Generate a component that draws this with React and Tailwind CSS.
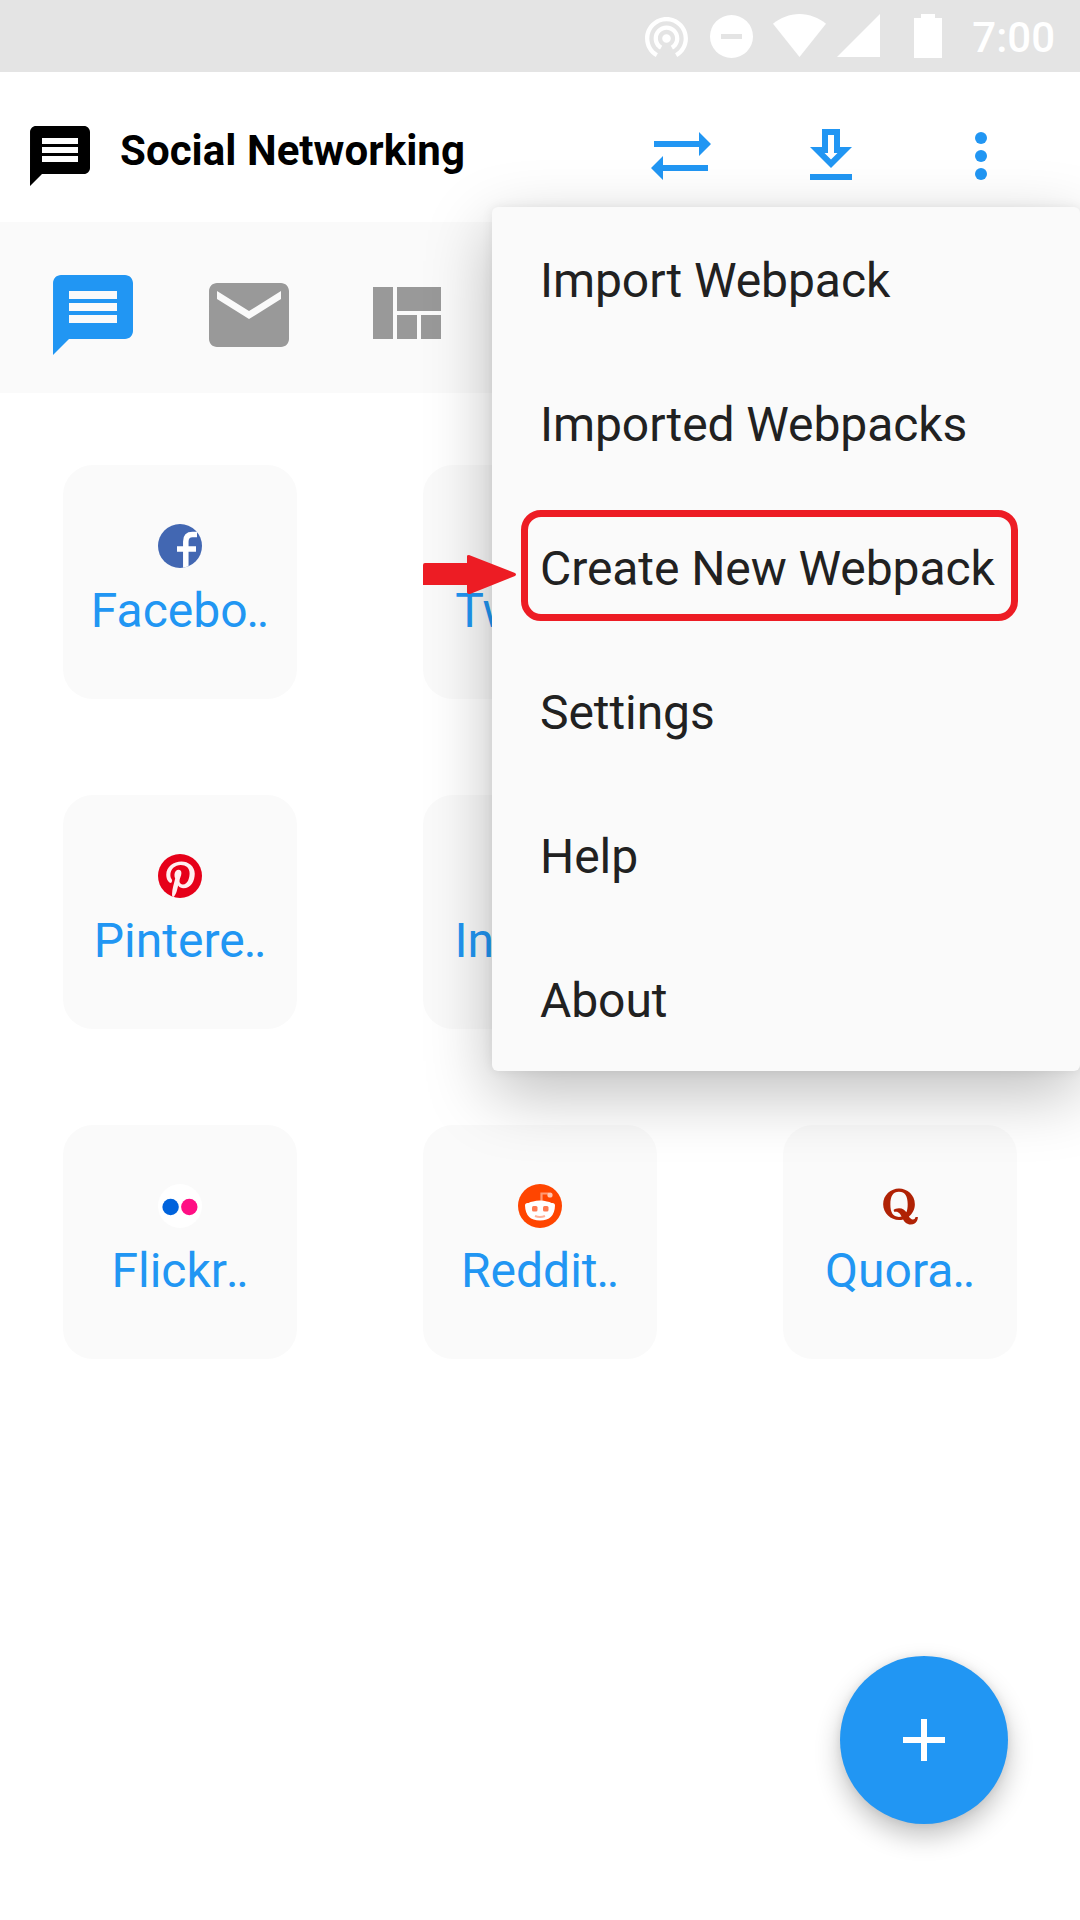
import React from "react";
import { FaQuora, FaPinterestP } from "react-icons/fa";

const MESSAGE =
  "M20 2H4c-1.1 0-1.99.9-1.99 2L2 22l4-4h14c1.1 0 2-.9 2-2V4c0-1.1-.9-2-2-2zm-2 12H6v-2h12v2zm0-3H6V9h12v2zm0-3H6V6h12v2z";
const MAIL =
  "M20 4H4c-1.1 0-1.99.9-1.99 2L2 18c0 1.1.9 2 2 2h16c1.1 0 2-.9 2-2V6c0-1.1-.9-2-2-2zm0 4l-8 5-8-5V6l8 5 8-5v2z";
const QUILT =
  "M10 18h5v-6h-5v6zm-6 0h5V5H4v13zm12 0h5v-6h-5v6zM10 5v6h11V5H10z";
const TETHERING =
  "M12 11c-1.1 0-2 .9-2 2s.9 2 2 2 2-.9 2-2-.9-2-2-2zm6 2c0-3.31-2.69-6-6-6s-6 2.69-6 6c0 2.22 1.21 4.15 3 5.19l1-1.74c-1.19-.7-2-1.97-2-3.45 0-2.21 1.79-4 4-4s4 1.79 4 4c0 1.48-.81 2.75-2 3.45l1 1.74c1.79-1.04 3-2.97 3-5.19zM12 3C6.48 3 2 7.48 2 13c0 3.7 2.01 6.92 4.99 8.65l1-1.73C5.61 18.53 4 15.96 4 13c0-4.42 3.58-8 8-8s8 3.58 8 8c0 2.96-1.61 5.53-4 6.92l1 1.73c2.99-1.73 5-4.95 5-8.65 0-5.52-4.48-10-10-10z";

function Icon({ d, className }) {
  return (
    <svg viewBox="0 0 24 24" fill="currentColor" className={className}>
      <path d={d} />
    </svg>
  );
}

function StatusBar() {
  return (
    <div className="flex h-[72px] items-start justify-end bg-[#e4e4e4] pr-[24px] text-white">
      <svg viewBox="2 3 20 18.65" fill="currentColor" className="mt-[17px] h-[40px] w-[43px]">
        <path d={TETHERING} />
      </svg>
      <svg viewBox="0 0 43 43" className="mt-[15px] ml-[22px] size-[43px]">
        <path fillRule="evenodd" fill="currentColor" d="M21.5 0a21.5 21.5 0 1 0 0 43a21.5 21.5 0 1 0 0-43zM11 19h21v5H11z" />
      </svg>
      <svg viewBox="0 0 53 43" className="mt-[14px] ml-[20px] h-[43px] w-[53px]">
        <path fill="currentColor" d="M0 9.700C7.500 3.800 16.500 0 26.500 0S45.500 3.800 53 9.700L26.500 43z" />
      </svg>
      <svg viewBox="0 0 43 43" className="mt-[14px] ml-[11px] size-[43px]">
        <path fill="currentColor" d="M43 0V43H0z" />
      </svg>
      <svg viewBox="0 0 28 44" className="mt-[14px] ml-[34px] h-[44px] w-[28px]">
        <path fill="currentColor" d="M7 0h14v4h7v40H0V4h7z" />
      </svg>
      <span className="mt-[13px] ml-[30px] w-[84px] pr-px text-right text-[42px] leading-[50px] font-medium whitespace-nowrap">7:00</span>
    </div>
  );
}

function Header() {
  return (
    <div className="flex h-[150px] items-start bg-white pl-[24px]">
      <Icon d={MESSAGE} className="mt-[48px] size-[72px] text-black" />
      <h1 className="mt-[54px] ml-[24px] w-[522px] text-[42px] leading-[50px] font-bold tracking-[0.05px] whitespace-nowrap text-black">
        Social Networking
      </h1>
      <div className="mt-[48px] flex text-[#2196f3]">
        <svg viewBox="0 0 72 72" fill="currentColor" className="ml-[3px] size-[72px]">
          <path d="M9 21h45v-9l12 12l-12 12v-9H9zM63 45H18v-9L6 48l12 12v-9h45z" />
        </svg>
        <svg viewBox="0 0 72 72" fill="currentColor" className="ml-[78px] size-[72px]">
          <path
            fillRule="evenodd"
            d="M27 9h18v18h12L36 48L15 27h12zM33 15v18h-3.500L36 39.500L42.500 33H39V15zM15 54h42v6H15z"
          />
        </svg>
        <svg viewBox="0 0 72 72" fill="currentColor" className="ml-[78px] size-[72px]">
          <circle cx="36" cy="18" r="6" />
          <circle cx="36" cy="36" r="6" />
          <circle cx="36" cy="54" r="6" />
        </svg>
      </div>
    </div>
  );
}

function CategoryTabs() {
  return (
    <div className="flex h-[171px] items-start gap-[60px] bg-[#fafafa] pt-[45px] pl-[45px] text-[#999999]">
      <Icon d={MESSAGE} className="size-[96px] text-[#2196f3]" />
      <Icon d={MAIL} className="size-[96px]" />
      <Icon d={QUILT} className="size-[96px]" />
    </div>
  );
}

function FacebookLogo() {
  return (
    <svg viewBox="0 0 44 44" className="size-[44px] rounded-full">
      <rect width="44" height="44" fill="#4267b2" />
      <g className="blur-[0.6px]" fill="none" stroke="#fff" strokeWidth="5.500">
        <path d="M27.800 46V17.500C27.800 12.500 30.500 10.500 34.500 10.500H39" />
        <path d="M19 25h19" />
      </g>
    </svg>
  );
}

function PinterestLogo() {
  return (
    <div className="flex size-[44px] items-start justify-center overflow-hidden rounded-full bg-[#e60019]">
      <FaPinterestP className="mt-[7px] h-[38px] w-[31px] text-[#ffeef0] blur-[0.6px]" />
    </div>
  );
}

function FlickrLogo() {
  return (
    <svg viewBox="0 0 44 44" className="size-[44px]">
      <circle cx="22" cy="22" r="22" fill="#fff" />
      <g className="blur-[0.6px]">
        <circle cx="12.600" cy="23" r="8.200" fill="#0063dc" />
        <circle cx="31.300" cy="23" r="8.200" fill="#ff0f84" />
      </g>
    </svg>
  );
}

function RedditLogo() {
  return (
    <svg viewBox="0 0 44 44" className="size-[44px]">
      <circle cx="22" cy="22" r="22" fill="#ff4500" />
      <g className="blur-[0.6px]">
        <path d="M23.500 18V9.500H31" fill="none" stroke="#ff9a75" strokeWidth="2.200" />
        <circle cx="32" cy="11" r="2.600" fill="#ffc5af" />
        <path
          d="M7 21.500Q7 18.500 10.500 19Q14 17 22 16.500Q30 17 33.500 19Q37 18.500 37 21.500Q36.500 36.500 22 36.500T7 21.500z"
          fill="#fff"
        />
        <rect x="14" y="22" width="5.500" height="5.500" rx="1.500" fill="#ff7a50" />
        <rect x="25" y="22" width="5.500" height="5.500" rx="1.500" fill="#ff7a50" />
        <path d="M17 32q5 2 10 0" fill="none" stroke="#ffb39a" strokeWidth="2.200" />
      </g>
    </svg>
  );
}

function QuoraLogo() {
  return (
    <div className="flex size-[44px] items-center justify-center rounded-full">
      <FaQuora className="h-[41px] w-[37px] text-[#b02205] blur-[0.5px]" />
    </div>
  );
}

const SITES = [
  { label: "Facebo", logo: FacebookLogo },
  { label: "Twitter" },
  {},
  { label: "Pintere", logo: PinterestLogo },
  { label: "Instagr" },
  {},
  { label: "Flickr", logo: FlickrLogo },
  { label: "Reddit", logo: RedditLogo },
  { label: "Quora", logo: QuoraLogo },
];

function SiteGrid() {
  return (
    <div className="grid grid-cols-[repeat(3,234px)] gap-x-[126px] gap-y-[96px] px-[63px] pt-[72px]">
      {SITES.map(({ label, logo: Logo }, i) => (
        <div key={i} className="flex h-[234px] flex-col items-center rounded-[30px] bg-[#fafafa] pt-[59px]">
          <div className="size-[44px]">{Logo && <Logo />}</div>
          {label && (
            <span className="mt-[15px] pr-[2px] text-[48px] leading-[56px] whitespace-nowrap text-[#2196f3]">
              {label}
              <span className="-ml-px tracking-[-2.4px]">..</span>
            </span>
          )}
        </div>
      ))}
    </div>
  );
}

const MENU = ["Import Webpack", "Imported Webpacks", "Create New Webpack", "Settings", "Help", "About"];

function OverflowMenu() {
  return (
    <div className="absolute top-[207px] left-[492px] w-[588px] rounded-[6px] bg-[#fafafa] shadow-[0_22px_66px_rgba(0,0,0,0.26),0_0_12px_rgba(0,0,0,0.07)]">
      {MENU.map((item) => (
        <div key={item} className="flex h-[144px] items-center pl-[48px] text-[48px] leading-[56px] tracking-[-0.08px] whitespace-nowrap text-[#212121]">
          <span className="pt-[4px]">{item}</span>
        </div>
      ))}
    </div>
  );
}

function Annotation() {
  return (
    <>
      <div className="absolute top-[510px] left-[521px] h-[111px] w-[497px] rounded-[20px] border-[7px] border-[#ed1c24]" />
      <svg viewBox="0 0 93 39" className="absolute top-[555px] left-[423px] h-[39px] w-[93px]">
        <path d="M2 8H44V1q0-1 2-1L92 18q2 1.500 0 3L47 39q-3 0-3-2V30H0V10q0-2 2-2z" fill="#ed1c24" />
      </svg>
    </>
  );
}

export default function App() {
  return (
    <div className="relative h-[1920px] w-[1080px] overflow-hidden bg-white font-['Roboto',sans-serif]">
      <StatusBar />
      <Header />
      <CategoryTabs />
      <SiteGrid />
      <OverflowMenu />
      <Annotation />
      <button className="absolute top-[1656px] left-[840px] flex size-[168px] items-center justify-center rounded-full bg-[#2196f3] shadow-[0_12px_26px_rgba(0,0,0,0.24),0_0_8px_rgba(0,0,0,0.08)]">
        <svg viewBox="0 0 42 42" className="size-[42px]">
          <path d="M18 0h6v18h18v6H24v18h-6V24H0v-6h18z" fill="#fff" />
        </svg>
      </button>
    </div>
  );
}
